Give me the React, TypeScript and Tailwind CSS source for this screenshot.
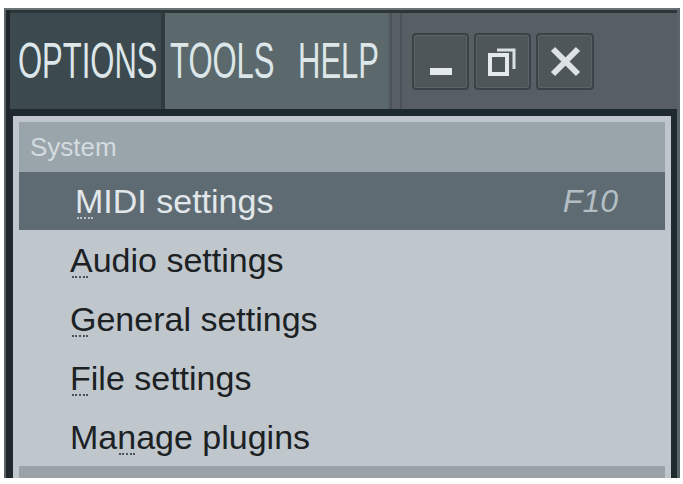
import type { ReactNode } from "react";

const FONT = { fontFamily: '"Liberation Sans", Arial, sans-serif' };

// first letter with the dotted access-key mark under it
function Accel({ children, offset = 0 }: { children: ReactNode; offset?: number }) {
  return (
    <span className="relative">
      {children}
      <span
        className={
          offset
            ? "absolute left-[-16px] bottom-[1px] w-[16px] border-b-2 border-dotted border-current opacity-70"
            : "absolute left-[2px] bottom-[1px] w-[16px] border-b-2 border-dotted border-current opacity-70"
        }
      />
    </span>
  );
}

function TopWord({ text, width }: { text: string; width: string }) {
  return (
    <div className={`${width} h-full flex items-center`}>
      <span className="origin-left scale-x-[0.62] whitespace-nowrap text-[50px] leading-none text-[#dde6e8]">
        {text}
      </span>
    </div>
  );
}

function WinButton({ children, wide }: { children: ReactNode; wide?: boolean }) {
  return (
    <div
      className={`${wide ? "w-[58px]" : "w-[57px]"} h-[57px] rounded-[4px] border-2 border-[#3b4346] bg-[#4e565a] shadow-[inset_0_0_0_1px_#5a6367]`}
    >
      {children}
    </div>
  );
}

function MenuRow({ label, first, rest }: { label?: string; first: string; rest: string }) {
  return (
    <div className="h-[59px] flex items-center pl-[51px] text-[34px] leading-none text-[#1c2124]">
      <span className="whitespace-nowrap" aria-label={label}>
        {first.length ? <Accel>{first}</Accel> : null}
        {rest}
      </span>
    </div>
  );
}

export default function App() {
  return (
    <div className="w-[683px] h-[484px] bg-white pt-[8px] pl-[4px] pr-[3px] pb-[6px]" style={FONT}>
      <div className="h-full flex flex-col bg-[#1f272b] border-l-2 border-t-2 border-r-[3px] border-l-[#5b6469] border-t-[#6a7376] border-r-[#5a636a] pl-[4px]">
        {/* Menu bar */}
        <div className="h-[99px] flex border-t-[3px] border-[#2c3538]">
          <div className="w-[151px] bg-[#3c4a4f] pl-[8px]">
            <TopWord text="OPTIONS" width="w-[143px]" />
          </div>
          <div className="w-[4px] bg-[#2f3a3e]" />
          <div className="w-[223px] bg-[#5b696d] flex pl-[5px]">
            <TopWord text="TOOLS" width="w-[128px]" />
            <TopWord text="HELP" width="w-[90px]" />
          </div>
          <div className="w-[16px] bg-[#575f64] flex justify-between px-[2px]">
            <div className="w-[2px] bg-[#4b5357]" />
            <div className="w-[2px] bg-[#4b5357]" />
          </div>
          <div className="flex-1 bg-[#575f64] flex items-center pl-[8px] gap-[5px]">
            <WinButton>
              <svg width="53" height="53" viewBox="0 0 53 53">
                <rect x="16" y="33" width="22" height="7" fill="#e4eaec" />
              </svg>
            </WinButton>
            <WinButton>
              <svg width="53" height="53" viewBox="0 0 53 53">
                <path d="M21 15 H38 V34" fill="none" stroke="#d9e0e3" strokeWidth="3" />
                <rect x="14" y="20" width="17" height="19" fill="none" stroke="#e4eaec" strokeWidth="4" />
              </svg>
            </WinButton>
            <WinButton wide>
              <svg width="54" height="53" viewBox="0 0 54 53">
                <path d="M15 14 L40 39 M40 14 L15 39" stroke="#dde3e5" strokeWidth="6" />
              </svg>
            </WinButton>
          </div>
        </div>

        {/* Dropdown */}
        <div className="flex-1 flex flex-col border-t-[7px] border-l-[3px] border-r-[6px] border-[#1f2a2e] bg-[#bfc7cd] px-[6px] pt-[6px]">
          <div className="h-[50px] bg-[#9aa5ab] flex items-center pl-[11px] text-[26px] leading-none text-[#d4dbde]">
            System
          </div>
          <div className="h-[58px] bg-[#5e6b73] flex items-center justify-between pl-[56px] pr-[47px]">
            <span className="whitespace-nowrap text-[34px] leading-none text-[#e1e7ea]">
              <Accel>M</Accel>IDI settings
            </span>
            <span className="italic text-[32px] leading-none text-[#b3bec4]">F10</span>
          </div>
          <MenuRow first="A" rest="udio settings" />
          <MenuRow first="G" rest="eneral settings" />
          <MenuRow first="F" rest="ile settings" />
          <div className="h-[59px] flex items-center pl-[51px] text-[34px] leading-none text-[#1c2124]">
            <span className="whitespace-nowrap">
              Ma<Accel>n</Accel>age plugins
            </span>
          </div>
          <div className="flex-1 bg-[#9ba2a7]" />
        </div>
      </div>
    </div>
  );
}
